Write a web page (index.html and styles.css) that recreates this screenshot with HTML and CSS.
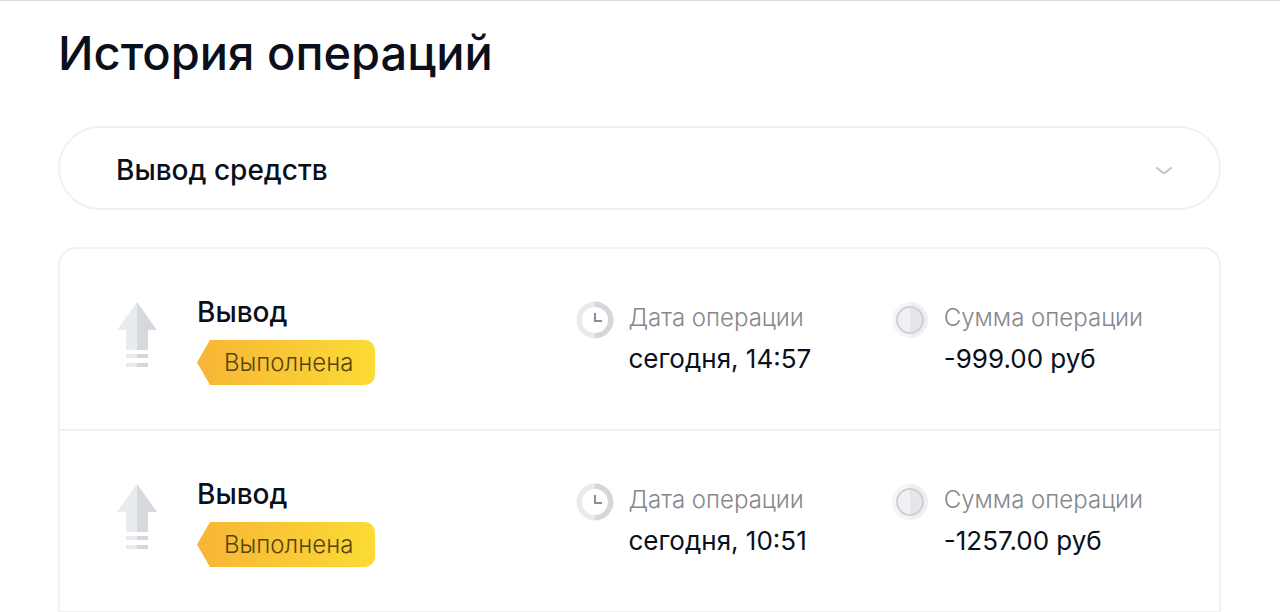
FILE: index.html
```html
<!DOCTYPE html>
<html lang="ru">
<head>
<meta charset="utf-8">
<meta name="viewport" content="width=device-width, initial-scale=1">
<title>История операций</title>
<link rel="stylesheet" href="styles.css">
</head>
<body>
<svg class="sprite" aria-hidden="true">
  <symbol id="arrow" viewBox="0 0 40 66">
    <path fill="#e8ebef" d="M20 0v48H9V28H0z"/><path fill="#d5d8dd" d="M20 0v48h11V28h9z"/>
    <path fill="#e8e9ec" d="M9 52h11v4H9zM9 61h11v4H9z"/><path fill="#d5d6da" d="M20 52h11v4H20zM20 61h11v4H20z"/>
  </symbol>
  <symbol id="clock" viewBox="0 0 38 38">
    <path fill="#e9eaee" d="M19 .5a18.500 18.500 0 0 0 0 37v-5.500a13 13 0 0 1 0-26z"/>
    <path fill="#d6d7dd" d="M19 .5a18.500 18.500 0 0 1 0 37v-5.500a13 13 0 0 0 0-26z"/>
    <path fill="none" stroke="#8b8d96" stroke-width="2" d="M19 12v8h7"/>
  </symbol>
  <symbol id="coin" viewBox="0 0 38 38">
    <path fill="#f4f5f7" d="M18 1a18 18 0 0 0 0 36z"/><path fill="#eeeff2" d="M18 1a18 18 0 0 1 0 36z"/>
    <path fill="#eff1f4" d="M18 6a13 13 0 0 0 0 26z"/><path fill="#e4e6ea" d="M18 6a13 13 0 0 1 0 26z"/>
    <circle cx="18" cy="19" r="13" fill="none" stroke="#cfd0d4" stroke-width="2"/>
  </symbol>
</svg>
<main class="page">
  <h1 class="title">История операций</h1>
  <div class="filter">
    <select class="filter-select" aria-label="Тип операции"><option>Вывод средств</option></select>
    <svg class="filter-chevron" viewBox="0 0 16 8" aria-hidden="true"><path d="M1 1l5 4q2 2 4 0l5-4"/></svg>
  </div>
  <ul class="operations">
    <li class="operation">
      <div class="kind">
        <svg class="kind-icon" aria-hidden="true"><use href="#arrow"/></svg>
        <div><h2 class="kind-name">Вывод</h2><span class="badge">Выполнена</span></div>
      </div>
      <div class="fact">
        <svg class="fact-icon" aria-hidden="true"><use href="#clock"/></svg>
        <div><p class="label">Дата операции</p><p class="value">сегодня, 14:57</p></div>
      </div>
      <div class="fact">
        <svg class="fact-icon" aria-hidden="true"><use href="#coin"/></svg>
        <div><p class="label">Сумма операции</p><p class="value">-999.00 руб</p></div>
      </div>
    </li>
    <li class="operation">
      <div class="kind">
        <svg class="kind-icon" aria-hidden="true"><use href="#arrow"/></svg>
        <div><h2 class="kind-name">Вывод</h2><span class="badge">Выполнена</span></div>
      </div>
      <div class="fact">
        <svg class="fact-icon" aria-hidden="true"><use href="#clock"/></svg>
        <div><p class="label">Дата операции</p><p class="value">сегодня, 10:51</p></div>
      </div>
      <div class="fact">
        <svg class="fact-icon" aria-hidden="true"><use href="#coin"/></svg>
        <div><p class="label">Сумма операции</p><p class="value">-1257.00 руб</p></div>
      </div>
    </li>
  </ul>
</main>
</body>
</html>
```
FILE: styles.css
```css
* { box-sizing: border-box; }

body {
  margin: 0;
  border-top: 1px solid #dedede;
  background: #fff;
  color: #0a101b;
  font-family: Inter, "Open Sans", sans-serif;
}

.sprite { position: absolute; width: 0; height: 0; }

.page { padding: 24px 59px 0 58px; }

.title {
  margin: 0 0 45px;
  font-size: 47px;
  line-height: 56px;
  font-weight: 500;
}

.filter { position: relative; margin-bottom: 37px; }

.filter-select {
  display: block;
  width: 100%;
  height: 84px;
  padding: 4px 96px 0 56px;
  border: 2px solid #f1f1f1;
  border-radius: 42px;
  background: #fff;
  color: inherit;
  font: 500 28px/36px Inter, "Open Sans", sans-serif;
  appearance: none;
}

.filter-chevron {
  position: absolute;
  top: 41px;
  right: 49px;
  width: 16px;
  height: 8px;
  fill: none;
  stroke: #c4c4c4;
  stroke-width: 2;
  stroke-linecap: round;
  stroke-linejoin: round;
  pointer-events: none;
}

.operations {
  margin: 0;
  padding: 0;
  list-style: none;
  border: 2px solid #f1f1f1;
  border-bottom: 0;
  border-radius: 18px 18px 0 0;
}

.operation {
  display: grid;
  grid-template-columns: 459fr 315fr 270fr;
  padding: 45px 57px 44px;
  border-bottom: 2px solid #f1f1f1;
}

.kind { display: flex; gap: 40px; }

.kind-icon { flex: none; width: 40px; height: 66px; margin-top: 8px; }

.kind-name {
  margin: 0 0 10px;
  font-size: 28px;
  line-height: 36px;
  font-weight: 500;
}

.badge {
  display: block;
  padding: 0 22px 0 27px;
  border-radius: 0 10px 10px 0;
  background: linear-gradient(90deg, #f7b536, #fbdb35);
  clip-path: polygon(0 50%, 13px 0, 100% 0, 100% 100%, 13px 100%);
  color: #57430f;
  font-size: 24px;
  line-height: 45px;
  font-weight: 300;
}

.fact { display: flex; gap: 14px; margin-top: 6px; white-space: nowrap; }

.fact-icon { flex: none; width: 38px; height: 38px; margin-top: 1px; }

.label, .value { margin: 0; }

.label {
  margin-bottom: 5px;
  color: #85878c;
  font-size: 24px;
  line-height: 36px;
  font-weight: 300;
}

.value { font-size: 26px; line-height: 36px; font-weight: 400; }
```
